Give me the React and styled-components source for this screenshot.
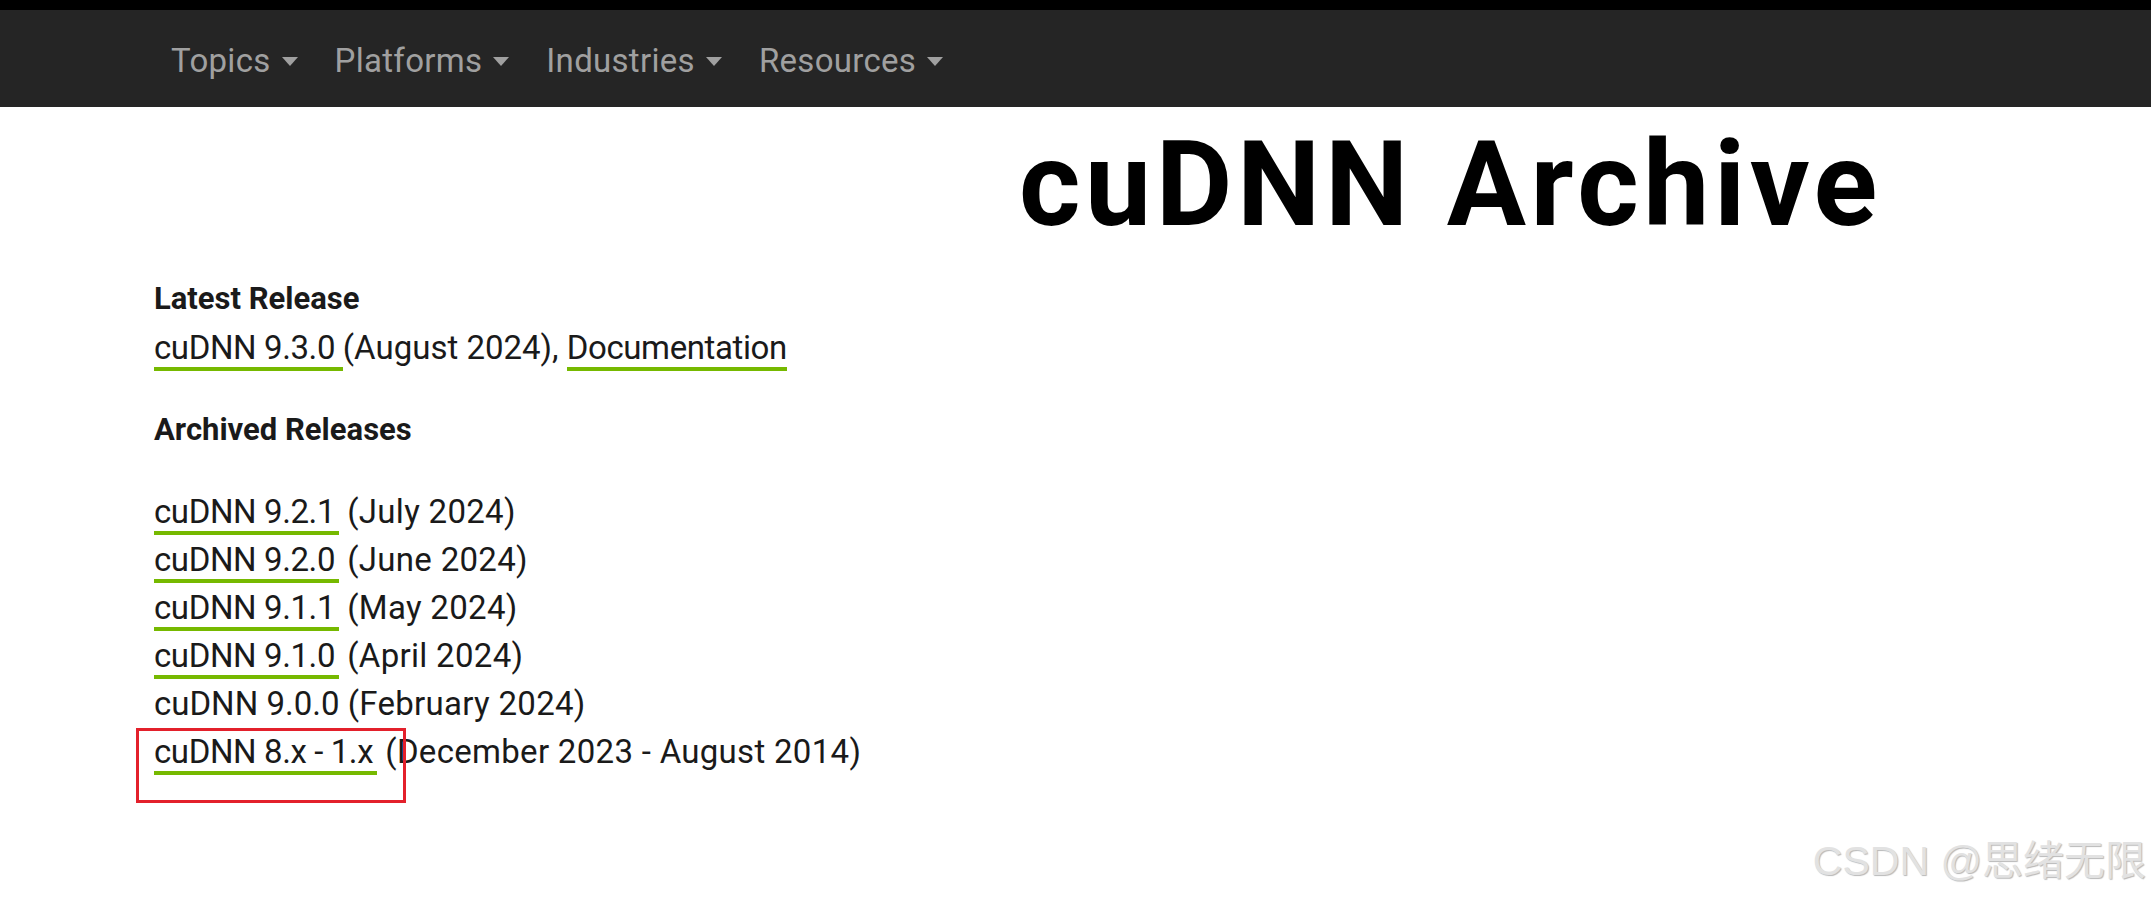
import React from 'react';
import styled, { createGlobalStyle } from 'styled-components';

const GlobalStyle = createGlobalStyle`
    body{
        margin: 0;
        background: #ffffff;
        font-family: Roboto, "Noto Sans", sans-serif;
        color: #1a1a1a;
    }
`;

const navItems = ['Topics', 'Platforms', 'Industries', 'Resources'];

const archived = [
    { version: 'cuDNN 9.2.1', date: '(July 2024)', link: true },
    { version: 'cuDNN 9.2.0', date: '(June 2024)', link: true },
    { version: 'cuDNN 9.1.1', date: '(May 2024)', link: true },
    { version: 'cuDNN 9.1.0', date: '(April 2024)', link: true },
    { version: 'cuDNN 9.0.0', date: '(February 2024)', link: false },
    { version: 'cuDNN 8.x - 1.x', date: '(December 2023 - August 2014)', link: true, marked: true },
];

export default function App(){
    return (
        <S.Page>
            <GlobalStyle />
            <S.TopStrip />
            <S.NavBar>
                {navItems.map((item) => (
                    <S.NavItem key={item}>
                        {item}
                        <S.Caret />
                    </S.NavItem>
                ))}
            </S.NavBar>

            <S.Main>
                <S.TitleRow>
                    <S.Title>cuDNN Archive</S.Title>
                </S.TitleRow>

                <S.Heading>Latest Release</S.Heading>
                <S.Line>
                    <S.Link>cuDNN 9.3.0 </S.Link>(August 2024), <S.Link>Documentation</S.Link>
                </S.Line>

                <S.Heading spaced>Archived Releases</S.Heading>
                <S.List>
                    {archived.map((row) => (
                        <S.Line key={row.version}>
                            <S.LinkWrap>
                                {row.link
                                    ? <S.Link trail>{row.version}</S.Link>
                                    : <span>{row.version}</span>}
                                {row.marked && <S.Marker />}
                            </S.LinkWrap>
                            {' '}<S.Date>{row.date}</S.Date>
                        </S.Line>
                    ))}
                </S.List>
            </S.Main>

            <S.Watermark>CSDN @思绪无限</S.Watermark>
        </S.Page>
    );
}

const S = {
    Page: styled.div`
        position: relative;
        min-height: 100vh;
    `,
    TopStrip: styled.div`
        height: 10px;
        background: #000000;
    `,
    NavBar: styled.nav`
        display: flex;
        align-items: center;
        gap: 37px;
        height: 97px;
        padding: 3px 0 0 171px;
        box-sizing: border-box;
        background: #252525;
    `,
    NavItem: styled.div`
        display: flex;
        align-items: center;
        font-family: Roboto, sans-serif;
        font-size: 33px;
        letter-spacing: 0.3px;
        color: #a0a0a0;
    `,
    Caret: styled.span`
        width: 0;
        height: 0;
        margin-left: 11px;
        margin-top: 3px;
        border-left: 8px solid transparent;
        border-right: 8px solid transparent;
        border-top: 9px solid #a0a0a0;
    `,
    Main: styled.main`
        padding: 0 0 60px 154px;
    `,
    TitleRow: styled.div`
        display: flex;
        padding-left: 865px;
        margin-top: 18px;
    `,
    Title: styled.h1`
        margin: 0;
        font-family: Roboto, sans-serif;
        font-weight: 700;
        font-size: 118px;
        line-height: 120px;
        letter-spacing: 4.6px;
        color: #000000;
    `,
    Heading: styled.h2`
        margin: ${(p) => (p.spaced ? '38px 0 38px' : '34px 0 5px')};
        font-family: Roboto, sans-serif;
        font-weight: 700;
        font-size: 31px;
        line-height: 40px;
        color: #1a1a1a;
    `,
    List: styled.div`
        display: flex;
        flex-direction: column;
    `,
    Line: styled.div`
        font-family: Roboto, sans-serif;
        font-size: 33px;
        line-height: 48px;
        color: #1a1a1a;
    `,
    LinkWrap: styled.span`
        position: relative;
    `,
    Link: styled.span`
        padding-right: ${(p) => (p.trail ? '4px' : '0')};
        letter-spacing: -0.4px;
        border-bottom: 4px solid #76b900;
        cursor: pointer;
    `,
    Date: styled.span`
        letter-spacing: 0.3px;
    `,
    Marker: styled.span`
        position: absolute;
        display: block;
        left: -18px;
        top: -4px;
        width: 270px;
        height: 75px;
        box-sizing: border-box;
        border: 3px solid #e3202b;
    `,
    Watermark: styled.div`
        position: absolute;
        right: 5px;
        bottom: 10px;
        font-family: "Liberation Sans", "Noto Sans CJK SC", sans-serif;
        font-size: 41px;
        color: #e2e2e2;
        text-shadow: 1px 1px 1px #b8b8b8;
    `,
};
